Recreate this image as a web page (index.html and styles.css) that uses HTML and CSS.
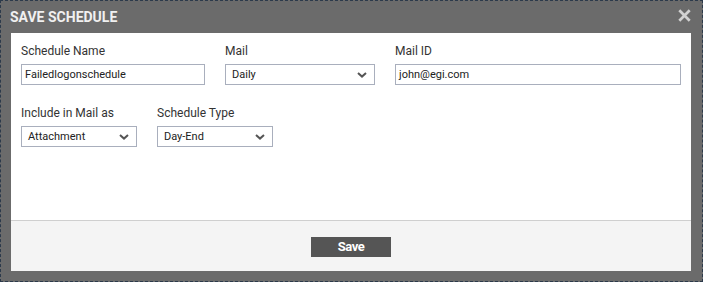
FILE: index.html
```html
<!DOCTYPE html>
<html>
<head>
<meta charset="utf-8">
<link rel="stylesheet" href="styles.css">
</head>
<body>
<div class="dialog">
  <div class="header">
    <span class="title">SAVE SCHEDULE</span>
    <svg class="close" width="13" height="13" viewBox="0 0 13 13"><path d="M1.3 1.3 L11.7 11.7 M11.7 1.3 L1.3 11.7" stroke="#d2d2d2" stroke-width="2.7" fill="none"/></svg>
  </div>
  <div class="panel">
    <div class="body">
      <div class="row">
        <div class="field">
          <label class="label">Schedule Name</label>
          <div class="input w184">Failedlogonschedule</div>
        </div>
        <div class="field">
          <label class="label">Mail</label>
          <div class="select w150"><span>Daily</span><svg class="chev" width="10" height="6" viewBox="0 0 10 6"><path d="M1 1 L5 4.6 L9 1" stroke="#555" stroke-width="2" fill="none"/></svg></div>
        </div>
        <div class="field">
          <label class="label">Mail ID</label>
          <div class="input w286">john@egi.com</div>
        </div>
      </div>
      <div class="row row2">
        <div class="field">
          <label class="label">Include in Mail as</label>
          <div class="select w116"><span>Attachment</span><svg class="chev" width="10" height="6" viewBox="0 0 10 6"><path d="M1 1 L5 4.6 L9 1" stroke="#555" stroke-width="2" fill="none"/></svg></div>
        </div>
        <div class="field">
          <label class="label">Schedule Type</label>
          <div class="select w116"><span>Day-End</span><svg class="chev" width="10" height="6" viewBox="0 0 10 6"><path d="M1 1 L5 4.6 L9 1" stroke="#555" stroke-width="2" fill="none"/></svg></div>
        </div>
      </div>
    </div>
    <div class="footer">
      <button class="save">Save</button>
    </div>
  </div>
</div>
</body>
</html>
```
FILE: styles.css
```css
* { box-sizing: border-box; }
html, body { margin: 0; padding: 0; }
body {
  width: 703px;
  height: 282px;
  font-family: Roboto, "Liberation Sans", sans-serif;
  background: #6b6b6b;
}
.dialog {
  width: 703px;
  height: 282px;
  border: 1px dashed #2c3a4b;
  background: #6b6b6b;
  padding: 0 11px 10px 10px;
  display: flex;
  flex-direction: column;
}
.header {
  height: 32px;
  display: flex;
  align-items: center;
  justify-content: space-between;
}
.title {
  color: #f0f0f0;
  font-weight: 700;
  font-size: 14px;
  line-height: 16px;
  margin-top: -1px;
  margin-left: -1px;
}
.close {
  display: block;
  margin-right: 0;
  margin-top: -3px;
}
.panel {
  flex: 1;
  display: flex;
  flex-direction: column;
  background: #fff;
}
.body {
  height: 187px;
  padding: 11px 10px 0 10px;
}
.row {
  display: flex;
  gap: 20px;
}
.row2 { margin-top: 21px; }
.field {
  display: flex;
  flex-direction: column;
}
.label {
  font-size: 12px;
  line-height: 14px;
  color: #333;
  margin-bottom: 6px;
}
.input, .select {
  height: 21px;
  border: 1px solid #a9afbd;
  font-size: 11px;
  color: #222;
  display: flex;
  align-items: center;
  background: #fff;
}
.input { padding-left: 3px; }
.select {
  padding-left: 6px;
  padding-right: 7px;
  justify-content: space-between;
}
.chev { display: block; }
.w184 { width: 184px; }
.w150 { width: 150px; }
.w286 { width: 286px; }
.w116 { width: 116px; }
.footer {
  flex: 1;
  border-top: 1px solid #cfcfcf;
  background: #f4f4f4;
  display: flex;
  align-items: center;
  justify-content: center;
}
.save {
  width: 80px;
  height: 20px;
  background: #555;
  border: none;
  color: #fff;
  font-family: Roboto, "Liberation Sans", sans-serif;
  font-weight: 700;
  font-size: 13px;
  letter-spacing: -0.5px;
  padding: 0;
  margin-top: 1px;
}
```
